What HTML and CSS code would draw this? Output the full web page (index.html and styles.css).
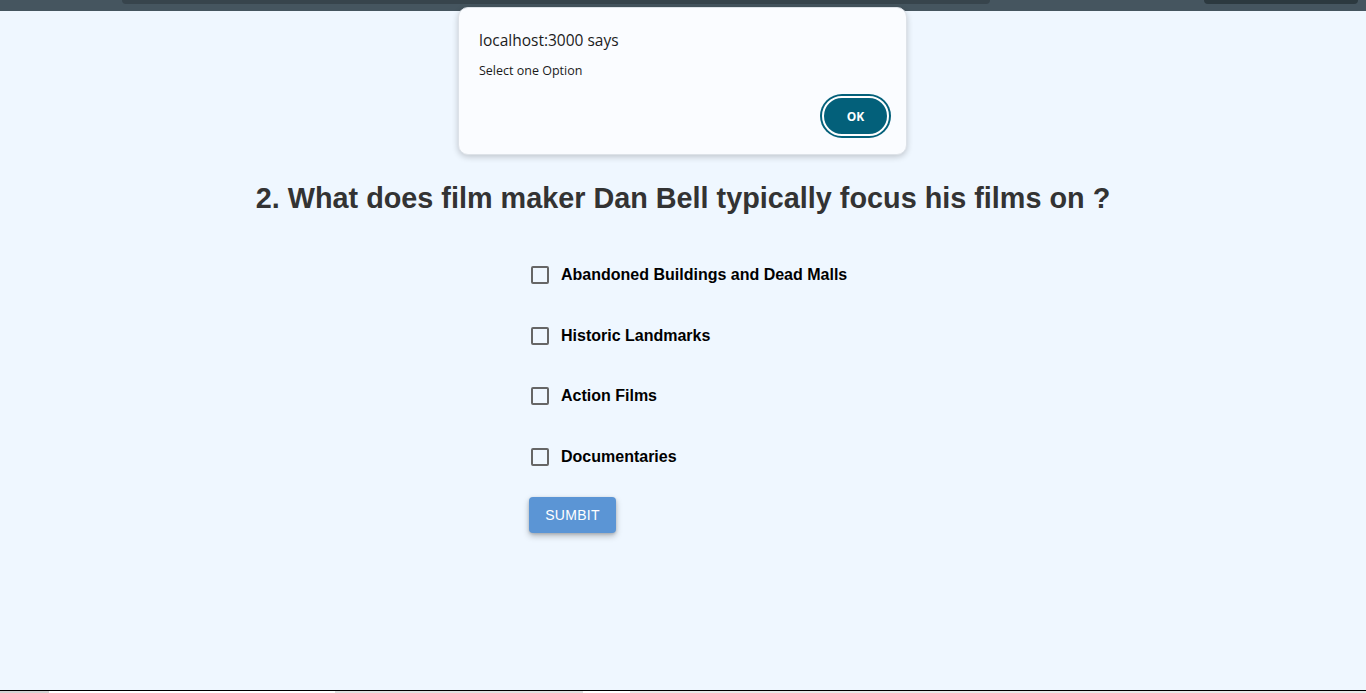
FILE: index.html
```html
<!DOCTYPE html>
<html>
<head>
<meta charset="utf-8">
<title>Quiz</title>
<link rel="stylesheet" href="styles.css">
</head>
<body>
<div class="topbar">
  <div class="tab-shape"></div>
  <div class="spacer"></div>
  <div class="profile-shape"></div>
</div>
<main class="page">
  <h1 class="question">2. What does film maker Dan Bell typically focus his films on ?</h1>
  <form class="options">
    <label class="option"><span class="box"></span><span class="label-text">Abandoned Buildings and Dead Malls</span></label>
    <label class="option"><span class="box"></span><span class="label-text">Historic Landmarks</span></label>
    <label class="option"><span class="box"></span><span class="label-text">Action Films</span></label>
    <label class="option"><span class="box"></span><span class="label-text">Documentaries</span></label>
    <button type="button" class="submit">SUMBIT</button>
  </form>
</main>
<div class="footer">
  <div class="seg s1"></div><div class="seg s2"></div><div class="seg s3"></div><div class="seg s4"></div><div class="seg s5"></div>
</div>
<div class="dialog">
  <div class="dialog-title">localhost:3000 says</div>
  <div class="dialog-msg">Select one Option</div>
  <div class="dialog-actions">
    <button type="button" class="ok">OK</button>
  </div>
</div>
</body>
</html>
```
FILE: styles.css
```css
* { box-sizing: border-box; }
html, body { margin: 0; padding: 0; }
body {
  width: 1366px;
  height: 693px;
  overflow: hidden;
  background: #eff7ff;
  font-family: "Liberation Sans", Arial, sans-serif;
  display: flex;
  flex-direction: column;
  position: relative;
}
.topbar {
  height: 11px;
  flex: none;
  background: #45555f;
  display: flex;
  align-items: flex-start;
  padding-left: 122px;
  padding-right: 8px;
}
.tab-shape {
  width: 868px;
  height: 4px;
  background: #37444c;
  border-radius: 0 0 10px 10px;
}
.spacer { flex: 1; }
.profile-shape {
  width: 154px;
  height: 4px;
  background: #2c393f;
  border-radius: 0 0 8px 8px;
}
.page {
  flex: 1;
  display: flex;
  flex-direction: column;
  align-items: center;
}
.question {
  margin: 170px 0 0;
  font-size: 28.8px;
  line-height: 34px;
  font-weight: bold;
  color: #333333;
  text-align: center;
}
.options {
  margin-top: 50px;
  width: 308px;
  display: flex;
  flex-direction: column;
  gap: 40.6px;
}
.option {
  display: flex;
  align-items: center;
  height: 20px;
  white-space: nowrap;
}
.box {
  width: 18px;
  height: 18px;
  border: 2px solid #666666;
  border-radius: 2px;
  margin-left: 2px;
  margin-right: 12px;
  flex: none;
}
.label-text {
  font-size: 16px;
  font-weight: bold;
  color: #000;
}
.submit {
  margin-top: -10px;
  align-self: flex-start;
  width: 87px;
  height: 36px;
  border: none;
  border-radius: 4px;
  background: #5b95d5;
  color: #ffffff;
  font-family: "Liberation Sans", Arial, sans-serif;
  font-size: 14px;
  letter-spacing: 0.3px;
  box-shadow: 0 3px 6px rgba(0,0,0,0.25), 0 1px 3px rgba(0,0,0,0.15);
}
.footer {
  flex: none;
  height: 3px;
  border-top: 1px solid #000;
  display: flex;
}
.seg { height: 2px; }
.s1 { width: 49px; background: #d4d4d4; }
.s2 { width: 286px; background: #ffffff; }
.s3 { width: 248px; background: #e0e0e0; }
.s4 { width: 47px; background: #ffffff; }
.s5 { flex: 1; background: #e8e8e8; }
.dialog {
  position: absolute;
  left: 458px;
  top: 7px;
  width: 449px;
  height: 148px;
  background: #fafcff;
  border: 1px solid #dde2e8;
  border-radius: 10px;
  box-shadow: 0 2px 6px rgba(0,0,0,0.2);
  padding: 21px 20px 0 20px;
  font-family: "Open Sans", "Noto Sans", sans-serif;
  color: #1b1b1b;
}
.dialog-title {
  font-size: 15.5px;
  line-height: 22px;
}
.dialog-msg {
  margin-top: 12px;
  font-size: 12.5px;
  line-height: 16px;
}
.dialog-actions {
  display: flex;
  justify-content: flex-end;
  margin-top: 17px;
}
.ok {
  width: 67px;
  height: 40px;
  margin-right: -3px;
  border-radius: 20px;
  background: #03607a;
  border: 2px solid #ffffff;
  box-shadow: 0 0 0 2px #03607a;
  color: #fff;
  font-family: "Open Sans", "Noto Sans", sans-serif;
  font-weight: bold;
  font-size: 12px;
}
```
